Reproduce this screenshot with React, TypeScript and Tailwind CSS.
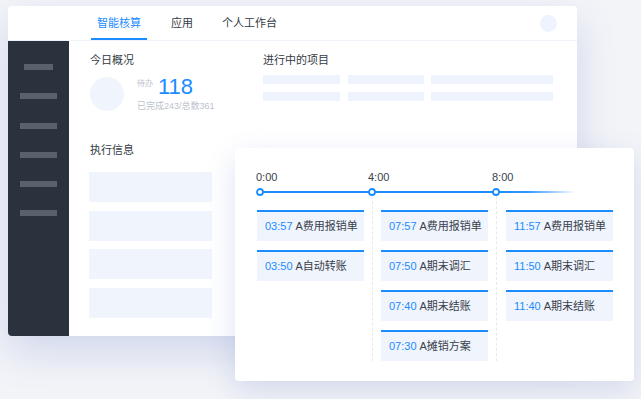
import React from 'react';

type Entry = { time: string; title: string };

const columns: Entry[][] = [
    [
        { time: '03:57', title: 'A费用报销单' },
        { time: '03:50', title: 'A自动转账' },
    ],
    [
        { time: '07:57', title: 'A费用报销单' },
        { time: '07:50', title: 'A期末调汇' },
        { time: '07:40', title: 'A期末结账' },
        { time: '07:30', title: 'A摊销方案' },
    ],
    [
        { time: '11:57', title: 'A费用报销单' },
        { time: '11:50', title: 'A期末调汇' },
        { time: '11:40', title: 'A期末结账' },
    ],
];

const EntryCard = ({ entry }: { entry: Entry }) => (
    <div className="h-[31px] w-[107px] border-t-2 border-[#1a8cff] bg-[#eff4fd] flex items-center pl-[8px] text-[11px] leading-none">
        <span className="text-[#1a8cff]">{entry.time}</span>
        <span className="ml-[3px] text-[#3a414b]">{entry.title}</span>
    </div>
);

const Column = ({ entries }: { entries: Entry[] }) => (
    <div className="flex flex-col gap-[9px] w-[107px]">
        {entries.map((e) => (
            <EntryCard key={e.time} entry={e} />
        ))}
    </div>
);

const Divider = ({ className }: { className: string }) => (
    <div className={'w-0 self-stretch -mt-[14px] border-l border-dashed border-[#e4e8ef] ' + className} />
);

const Timeline = () => (
    <div>
        <div className="flex pl-[21px] text-[11px] leading-[14px] text-[#3a414b]">
            <span className="w-[112px]">0:00</span>
            <span className="w-[124px]">4:00</span>
            <span>8:00</span>
        </div>
        <svg width="360" height="10" className="mt-[3px] block">
            <defs>
                <linearGradient id="fade" x1="0" x2="1" y1="0" y2="0">
                    <stop offset="0" stopColor="#1a8cff" stopOpacity="1" />
                    <stop offset="0.4" stopColor="#1a8cff" stopOpacity="0.9" />
                    <stop offset="1" stopColor="#1a8cff" stopOpacity="0" />
                </linearGradient>
            </defs>
            <line x1="25" y1="5" x2="261" y2="5" stroke="#1a8cff" strokeWidth="2" />
            <rect x="261" y="4" width="80" height="2" fill="url(#fade)" />
            {[25, 137, 261].map((cx) => (
                <circle key={cx} cx={cx} cy="5" r="3" fill="#fff" stroke="#1a8cff" strokeWidth="1.8" />
            ))}
        </svg>
    </div>
);

const SideBar = () => (
    <div className="w-[61px] shrink-0 bg-[#2a333d] flex flex-col items-center pt-[23px] gap-[23.3px]">
        <div className="h-[6px] w-[29px] bg-[#59626c]" />
        {[0, 1, 2, 3, 4].map((i) => (
            <div key={i} className="h-[6px] w-[37px] bg-[#59626c]" />
        ))}
    </div>
);

const App = () => {
    return (
        <div
            className="relative w-[641px] h-[399px] overflow-hidden bg-[#f3f4f8]"
            style={{ fontFamily: '"Liberation Sans", "Noto Sans CJK SC", sans-serif' }}
        >
            {/* back window */}
            <div className="ml-[8px] mt-[6px] w-[569px] h-[330px] bg-white rounded-[4px] overflow-hidden flex flex-col shadow-[0_16px_40px_rgba(70,100,190,0.2)]">
                <div className="h-[35px] shrink-0 flex items-center border-b border-[#eef2f9] pl-[83px] pr-[20px] text-[11px] text-[#333a44]">
                    <div className="h-full flex items-center px-[6px] text-[#1a8cff] border-b-2 border-[#1a8cff]">
                        <span className="mt-[2px]">智能核算</span>
                    </div>
                    <span className="ml-[24px]">应用</span>
                    <span className="ml-[29px]">个人工作台</span>
                    <div className="ml-auto h-[17px] w-[17px] rounded-full bg-[#eef3fd]" />
                </div>
                <div className="flex flex-1 min-h-0">
                    <SideBar />
                    <div className="flex-1 pl-[21px] pt-[12px]">
                        <div className="flex">
                            <div className="w-[173px]">
                                <div className="text-[11px] leading-[14px] text-[#333a44]">今日概况</div>
                                <div className="flex items-center mt-[9px]">
                                    <div className="h-[34px] w-[34px] rounded-full bg-[#f0f4fc]" />
                                    <div className="ml-[13px]">
                                        <div className="flex items-center">
                                            <span className="text-[8px] text-[#bcc3cd] -mt-[6px]">待办</span>
                                            <span className="ml-[5px] text-[22px] leading-[22px] text-[#1a8cff]">118</span>
                                        </div>
                                        <div className="text-[9px] leading-[12px] text-[#bcc3cd] mt-[2px]">已完成243/总数361</div>
                                    </div>
                                </div>
                            </div>
                            <div>
                                <div className="text-[11px] leading-[14px] text-[#333a44]">进行中的项目</div>
                                <div className="mt-[8px] flex flex-col gap-[8px]">
                                    {[0, 1].map((i) => (
                                        <div key={i} className="flex gap-[7.5px]">
                                            <div className="h-[9px] w-[77px] bg-[#eef3fd]" />
                                            <div className="h-[9px] w-[76px] bg-[#eef3fd]" />
                                            <div className="h-[9px] w-[122px] bg-[#eef3fd]" />
                                        </div>
                                    ))}
                                </div>
                            </div>
                        </div>
                        <div className="mt-[31px] text-[11px] leading-[14px] text-[#333a44]">执行信息</div>
                        <div className="mt-[15px] flex flex-col gap-[8.5px]">
                            {[0, 1, 2, 3].map((i) => (
                                <div key={i} className="h-[30px] w-[123px] -ml-[1px] bg-[#f0f5fd]" />
                            ))}
                        </div>
                    </div>
                </div>
            </div>

            {/* front window */}
            <div className="absolute left-[235px] top-[148px] w-[399px] h-[233px] bg-white rounded-[4px] pt-[22px] shadow-[0_10px_30px_rgba(70,100,190,0.18)]">
                <Timeline />
                <div className="flex pl-[22px] pt-[13px]">
                    <Column entries={columns[0]} />
                    <Divider className="mx-[8px]" />
                    <Column entries={columns[1]} />
                    <Divider className="ml-[8px] mr-[9px]" />
                    <Column entries={columns[2]} />
                </div>
            </div>
        </div>
    );
};

export default App;
